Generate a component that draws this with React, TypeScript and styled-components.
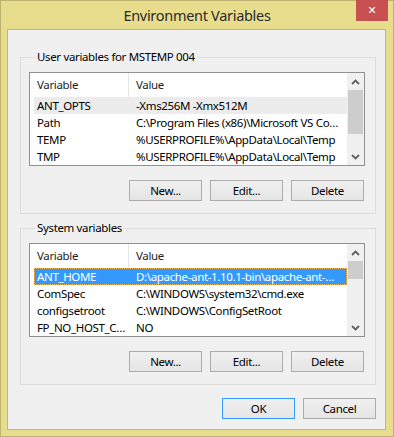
import React from 'react'
import styled, { createGlobalStyle } from 'styled-components'

interface EnvVar {
    name: string;
    value: string;
}

const userVars: EnvVar[] = [
    { name: 'ANT_OPTS', value: '-Xms256M -Xmx512M' },
    { name: 'Path', value: 'C:\\Program Files (x86)\\Microsoft VS Co…' },
    { name: 'TEMP', value: '%USERPROFILE%\\AppData\\Local\\Temp' },
    { name: 'TMP', value: '%USERPROFILE%\\AppData\\Local\\Temp' },
]

const systemVars: EnvVar[] = [
    { name: 'ANT_HOME', value: 'D:\\apache-ant-1.10.1-bin\\apache-ant-…' },
    { name: 'ComSpec', value: 'C:\\WINDOWS\\system32\\cmd.exe' },
    { name: 'configsetroot', value: 'C:\\WINDOWS\\ConfigSetRoot' },
    { name: 'FP_NO_HOST_C…', value: 'NO' },
]

const GlobalStyle = createGlobalStyle`
  body {
    margin: 0;
    font-family: "Noto Sans", "Open Sans", sans-serif;
    font-size: 11.5px;
    letter-spacing: -0.35px;
    color: #000;
  }
`;

function Chevron({ down }: { down?: boolean }) {
    return (
    <svg width="9" height="6" viewBox="0 0 9 6">
        <polyline
            points={down ? '1,1 4.5,4.5 8,1' : '1,5 4.5,1.5 8,5'}
            fill="none"
            stroke="#606060"
            strokeWidth="1.8"
        />
    </svg>
    )
}

interface ListProps {
    rows: EnvVar[];
    selected: number;
    focused?: boolean;
    thumbHeight: number;
}

function VarList({ rows, selected, focused, thumbHeight }: ListProps) {
    return (
    <ListView>
        <ListBody>
            <HeaderRow>
                <HeaderCell>Variable</HeaderCell>
                <HeaderCell $last>Value</HeaderCell>
            </HeaderRow>
            {rows.map((r, i) => (
                <Row key={r.name} $selected={i === selected} $focused={!!focused && i === selected}>
                    <NameCell>{r.name}</NameCell>
                    <ValueCell>{r.value}</ValueCell>
                </Row>
            ))}
        </ListBody>
        <ScrollBar>
            <ScrollButton><Chevron /></ScrollButton>
            <Track>
                <Thumb style={{ height: thumbHeight }} />
            </Track>
            <ScrollButton><Chevron down /></ScrollButton>
        </ScrollBar>
    </ListView>
    )
}

function ButtonRow() {
    return (
    <Buttons>
        <Button>New...</Button>
        <Button>Edit...</Button>
        <Button>Delete</Button>
    </Buttons>
    )
}

export default function App() {
    return (
    <>
        <GlobalStyle />
        <Window>
            <TitleBar>
                <span />
                <Title>Environment Variables</Title>
                <CloseButton>✕</CloseButton>
            </TitleBar>
            <Client>
                <GroupBox>
                    <Caption>User variables for MSTEMP 004</Caption>
                    <VarList rows={userVars} selected={0} thumbHeight={44} />
                    <ButtonRow />
                </GroupBox>
                <GroupBox>
                    <Caption>System variables</Caption>
                    <VarList rows={systemVars} selected={0} focused thumbHeight={18} />
                    <ButtonRow />
                </GroupBox>
                <Footer>
                    <Button $default>OK</Button>
                    <Button>Cancel</Button>
                </Footer>
            </Client>
        </Window>
    </>
    )
}

const Window = styled.div`
  width: 394px;
  height: 437px;
  box-sizing: border-box;
  border: 1px solid #bdb371;
  background: #e8dd8c;
  display: flex;
  flex-direction: column;
`;

const TitleBar = styled.div`
  height: 28px;
  display: grid;
  grid-template-columns: 1fr auto 1fr;
  padding-right: 5px;
`;

const Title = styled.div`
  font-size: 14.5px;
  line-height: 29px;
  color: #2b2b2b;
  padding-left: 5px;
  letter-spacing: -0.3px;
`;

const CloseButton = styled.div`
  justify-self: end;
  margin-top: -1px;
  width: 32px;
  height: 21px;
  background: #c75050;
  color: #fff;
  font-family: "DejaVu Sans", sans-serif;
  font-weight: bold;
  font-size: 11px;
  letter-spacing: 0;
  display: flex;
  align-items: center;
  justify-content: center;
`;

const Client = styled.div`
  margin: 0 7px 6px 6px;
  height: 401px;
  box-sizing: border-box;
  border: 1px solid #c3b977;
  background: #f0f0f0;
  padding: 27px 9px 0 12px;
  display: flex;
  flex-direction: column;
`;

const GroupBox = styled.div`
  border: 1px solid #dcdcdc;
  padding: 0 10px 12px 8px;
  display: flex;
  flex-direction: column;
  & + & {
    margin-top: 14px;
  }
`;

const Caption = styled.div`
  width: fit-content;
  margin: -9px 0 0 6px;
  padding: 0 2px;
  line-height: 16px;
  background: #f0f0f0;
  color: #000;
`;

const ListView = styled.div`
  margin-top: 7px;
  height: 94px;
  box-sizing: border-box;
  border: 1px solid #8f9092;
  background: #fff;
  display: grid;
  grid-template-columns: 1fr 17px;
  overflow: hidden;
`;

const ListBody = styled.div`
  padding-left: 4px;
  min-width: 0;
`;

const HeaderRow = styled.div`
  display: grid;
  grid-template-columns: 95px 1fr;
  height: 24px;
`;

const HeaderCell = styled.div<{ $last?: boolean }>`
  line-height: 24px;
  padding-left: ${p => (p.$last ? '7px' : '3px')};
  border-right: ${p => (p.$last ? 'none' : '1px solid #e5e5e5')};
  color: #1e1e1e;
`;

const Row = styled.div<{ $selected?: boolean; $focused?: boolean }>`
  display: grid;
  grid-template-columns: 95px 1fr;
  height: 17px;
  line-height: 17px;
  box-sizing: border-box;
  background: ${p => (p.$focused ? '#3399ff' : p.$selected ? '#ececec' : 'transparent')};
  color: ${p => (p.$focused ? '#fff' : '#000')};
  outline: ${p => (p.$focused ? '1px dotted #f3b35a' : 'none')};
  outline-offset: -1px;
`;

const NameCell = styled.div`
  padding-left: 3px;
  white-space: nowrap;
  overflow: hidden;
  text-overflow: ellipsis;
`;

const ValueCell = styled.div`
  padding-left: 7px;
  white-space: nowrap;
  overflow: hidden;
  text-overflow: ellipsis;
`;

const ScrollBar = styled.div`
  background: #f0f0f0;
  display: flex;
  flex-direction: column;
`;

const ScrollButton = styled.div`
  height: 17px;
  display: flex;
  align-items: center;
  justify-content: center;
`;

const Track = styled.div`
  flex: 1;
`;

const Thumb = styled.div`
  margin: 0 1px;
  background: #cdcdcd;
`;

const Buttons = styled.div`
  margin-top: 14px;
  display: flex;
  justify-content: flex-end;
  gap: 8px;
  padding-right: 1px;
`;

const Button = styled.div<{ $default?: boolean }>`
  width: 73px;
  height: 21px;
  box-sizing: border-box;
  border: 1px solid ${p => (p.$default ? '#3399ff' : '#acacac')};
  background: linear-gradient(#f0f0f0, #e5e5e5);
  display: flex;
  align-items: center;
  justify-content: center;
  color: #000;
`;

const Footer = styled.div`
  margin-top: 13px;
  display: flex;
  justify-content: flex-end;
  gap: 8px;
`;
